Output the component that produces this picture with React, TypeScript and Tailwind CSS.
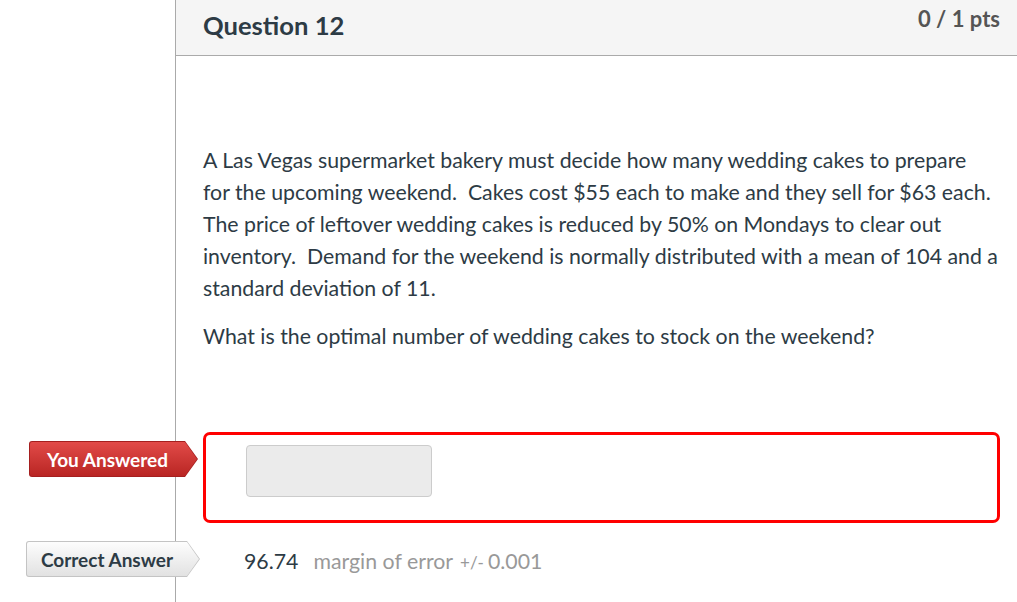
import React from 'react';

const font = { fontFamily: 'Lato, "Open Sans", sans-serif' };

function AnswerArrow({ text, variant }: { text: string; variant: 'wrong' | 'correct' }) {
    const outer = variant === 'wrong' ? 'bg-[#a51f1f]' : 'bg-[#c4c4c4]';
    const inner =
        variant === 'wrong'
            ? 'bg-gradient-to-b from-[#e24a48] to-[#b92523] text-white'
            : 'bg-gradient-to-b from-[#fdfdfd] to-[#e2e2e2] text-[#2d3b45]';
    return (
        <div className={`h-[36px] p-px rounded-l-[3px] [clip-path:polygon(0_0,calc(100%-13px)_0,100%_50%,calc(100%-13px)_100%,0_100%)] ${outer}`}>
            <div
                className={`h-full flex items-center justify-center pr-[12px] rounded-l-[2px] [clip-path:polygon(0_0,calc(100%-12px)_0,100%_50%,calc(100%-12px)_100%,0_100%)] ${inner}`}
            >
                <span className="text-[19px] font-bold leading-none whitespace-nowrap">{text}</span>
            </div>
        </div>
    );
}

export default function App() {
    return (
        <div className="w-[1017px] h-[602px] flex bg-white overflow-hidden text-[#2d3b45]" style={font}>
            <div className="w-[175px] shrink-0" />
            <div className="flex-1 border-l border-[#aaaaaa] flex flex-col">
                <div className="h-[56px] bg-[#f5f5f5] border-b border-[#aaaaaa] flex justify-between pl-[27px] pr-[17px]">
                    <h2 className="text-[25.6px] font-bold mt-[7px] leading-[36px]">Question 12</h2>
                    <div className="text-[22px] font-bold text-[#555555] mt-[4px] leading-[30px]">0 / 1 pts</div>
                </div>

                <div className="pl-[27px] pr-[10px] pt-[88px] text-[21.3px] leading-[32px] whitespace-nowrap">
                    <p>
                        A Las Vegas supermarket bakery must decide how many wedding cakes to prepare
                        <br />
                        for the upcoming weekend.&nbsp; Cakes cost $55 each to make and they sell for $63 each.
                        <br />
                        The price of leftover wedding cakes is reduced by 50% on Mondays to clear out
                        <br />
                        inventory.&nbsp; Demand for the weekend is normally distributed with a mean of 104 and a
                        <br />
                        standard deviation of 11.
                    </p>
                    <p className="mt-[16px]">What is the optimal number of wedding cakes to stock on the weekend?</p>
                </div>

                <div className="relative mt-[80px] ml-[27px] mr-[17px]">
                    <div className="absolute left-[-174px] top-[9px] w-[169px]">
                        <AnswerArrow text="You Answered" variant="wrong" />
                    </div>
                    <div className="h-[91px] border-[3px] border-[#ff0000] rounded-[7px] pt-[10px] pl-[40px]">
                        <div className="w-[186px] h-[52px] bg-[#ebebeb] border border-[#cccccc] rounded-[4px]" />
                    </div>
                </div>

                <div className="relative mt-[18px] ml-[27px] h-[36px] flex items-center">
                    <div className="absolute left-[-177px] top-0 w-[174px]">
                        <AnswerArrow text="Correct Answer" variant="correct" />
                    </div>
                    <div className="pl-[41px] pt-[5px] text-[21.3px] flex items-baseline">
                        <span>96.74</span>
                        <span className="ml-[15px] text-[#999999]">margin of error</span>
                        <span className="ml-[7px] text-[17px] text-[#999999]">+/-</span>
                        <span className="ml-[4px] text-[#999999]">0.001</span>
                    </div>
                </div>
            </div>
        </div>
    );
}
